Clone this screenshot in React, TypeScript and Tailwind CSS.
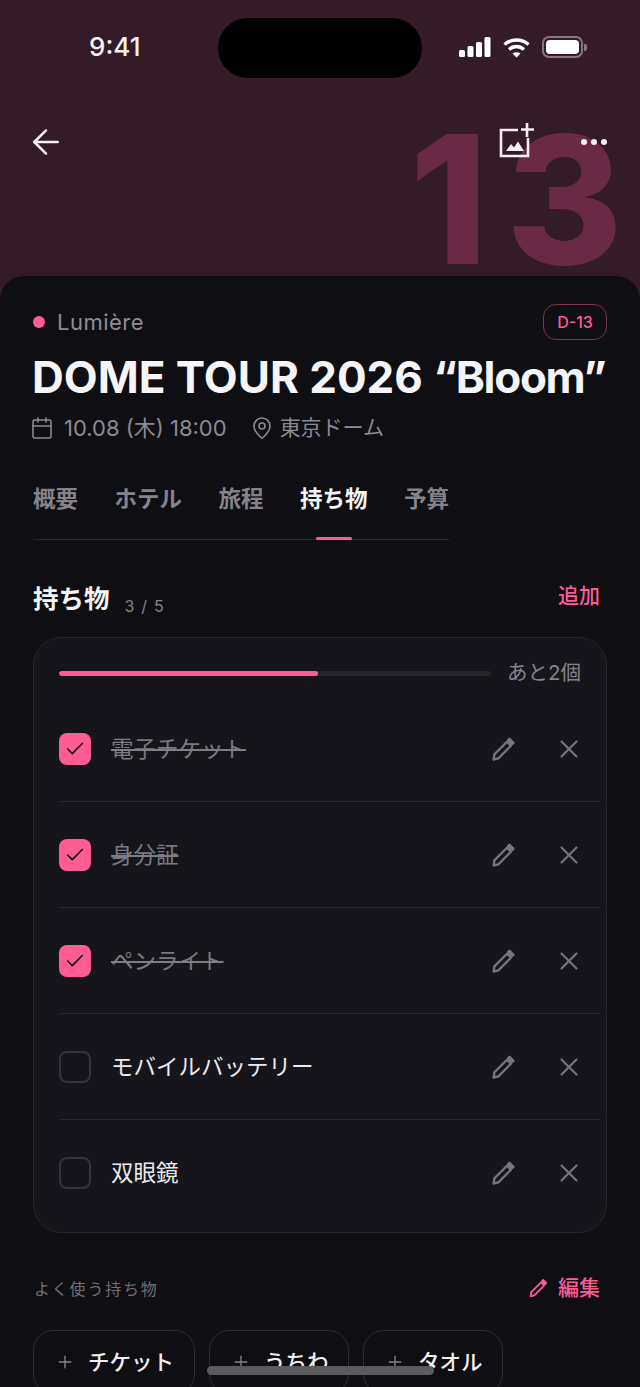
import { ArrowLeft, Calendar, Check, MapPin, Plus, X } from "lucide-react";

const font = { fontFamily: '"Inter", "Noto Sans CJK JP", sans-serif' };

function PencilIcon({ className }: { className: string }) {
  return (
    <svg viewBox="0 0 24 24" fill="none" stroke="currentColor" strokeWidth="2" strokeLinejoin="round" className={className}>
      <path d="M4 21l.6-4.4L15.4 5.8l3.4 3.4L8 20z" />
      <path d="M17.6 3.2l3.4 3.4-1.2 1.2-3.4-3.4z" fill="currentColor" />
    </svg>
  );
}

function ImagePlusIcon() {
  return (
    <svg viewBox="0 0 36 36" width="36" height="36" fill="none" className="text-[#f4eef1]">
      <path d="M19 8H2v26h27V16" stroke="currentColor" strokeWidth="2.6" />
      <path d="M28 1v14M22 7.5h13" stroke="currentColor" strokeWidth="2.6" />
      <path d="M7 29l5-7 3 3.5 4-6 6 9.5z" fill="currentColor" />
    </svg>
  );
}

const items = [
  { label: "電子チケット", done: true },
  { label: "身分証", done: true },
  { label: "ペンライト", done: true },
  { label: "モバイルバッテリー", done: false },
  { label: "双眼鏡", done: false },
];

const tabs = ["概要", "ホテル", "旅程", "持ち物", "予算"];
const chips = [
  { label: "チケット", w: "w-[162px]" },
  { label: "うちわ", w: "w-[140px]" },
  { label: "タオル", w: "w-[140px]" },
];

export default function App() {
  return (
    <div style={font} className="relative flex h-[1387px] w-[640px] flex-col overflow-hidden bg-[#341b28]">
      <header className="relative h-[276px] shrink-0">
        <div className="absolute -right-[1px] top-[82px] text-[178px] font-extrabold leading-[236px] tracking-[18px] text-[#6a2a45]">13</div>
        <div className="absolute left-[218px] top-[18px] h-[60px] w-[204px] rounded-[30px] bg-black" />
        <div className="relative flex h-[94px] items-center justify-between pl-[89px] pr-[53px]">
          <span className="text-[26px] font-medium leading-none text-[#f7f3f5]">9:41</span>
          <div className="flex items-center gap-[12px]">
            <svg width="32" height="20" viewBox="0 0 32 20" fill="#fff">
              <rect x="0" y="13" width="6" height="7" rx="1.5" />
              <rect x="8.5" y="9" width="6" height="11" rx="1.5" />
              <rect x="17" y="5" width="6" height="15" rx="1.5" />
              <rect x="25.5" y="0" width="6" height="20" rx="1.5" />
            </svg>
            <svg width="27" height="21" viewBox="0 0 27 21" fill="none" stroke="#fff" strokeWidth="3.4">
              <path d="M1.5 7.5c7-6 17-6 24 0" />
              <path d="M6 12.5c4.5-4 10.5-4 15 0" />
              <path d="M13.5 20.5l-4-4c2.4-1.8 5.6-1.8 8 0z" fill="#fff" stroke="none" />
            </svg>
            <div className="flex items-center gap-[1px]">
              <div className="h-[22px] w-[41px] rounded-[7px] border-[2px] border-[#8a7480] p-[2px]">
                <div className="h-full w-full rounded-[4px] bg-white" />
              </div>
              <div className="h-[7px] w-[3px] rounded-r-[2px] bg-[#8a7480]" />
            </div>
          </div>
        </div>
        <div className="relative mt-[28px] flex h-[40px] items-center pl-[26px] pr-[33px]">
          <ArrowLeft size={40} strokeWidth={1.5} className="text-[#f4eef1]" />
          <div className="ml-auto flex items-center gap-[46px]">
            <div className="-mt-[4px]"><ImagePlusIcon /></div>
            <svg width="26" height="6" viewBox="0 0 26 6" fill="#f4eef1">
              <circle cx="3" cy="3" r="3" />
              <circle cx="13" cy="3" r="3" />
              <circle cx="23" cy="3" r="3" />
            </svg>
          </div>
        </div>
      </header>

      <main className="relative flex-1 rounded-t-[24px] bg-[#0e0e13] px-[33px] pt-[28px]">
        <div className="flex h-[36px] items-center">
          <span className="h-[12px] w-[12px] rounded-full bg-[#ff5c93]" />
          <span className="ml-[12px] text-[22px] tracking-[0.5px] text-[#8f8d96]">Lumière</span>
          <span className="ml-auto flex h-[36px] w-[64px] items-center justify-center rounded-[13px] border-[1.5px] border-[#7a3450] text-[16px] font-medium text-[#ff5c93]">D-13</span>
        </div>

        <h1 className="-ml-[1px] mt-[8px] whitespace-nowrap text-[44px] font-bold leading-[58px] text-[#f5f4f6]">
          <span>DOME TOUR 2026 </span>
          <span className="tracking-[-1.3px]">“Bloom”</span>
        </h1>

        <div className="mt-[6px] flex h-[32px] items-center text-[22px] text-[#8b8a92]">
          <Calendar size={24} strokeWidth={1.6} className="-ml-[3px]" />
          <span className="ml-[10px] whitespace-nowrap">10.08 (木) 18:00</span>
          <MapPin size={24} strokeWidth={1.6} className="ml-[23px]" />
          <span className="ml-[6px] text-[21px]">東京ドーム</span>
        </div>

        <nav className="mt-[39px] flex w-[416px] justify-between border-b border-[#2a2a30] pb-[24px]">
          {tabs.map((t, i) => (
            <div key={t} className={`relative text-[22.5px] font-semibold leading-[32px] ${i === 3 ? "text-[#f5f4f6]" : "text-[#84838b]"}`}>
              {t}
              {i === 3 && <span className="absolute -bottom-[25px] left-1/2 h-[3px] w-[36px] -translate-x-1/2 rounded-full bg-[#ff5c93]" />}
            </div>
          ))}
        </nav>

        <div className="mt-[40px] flex h-[36px] items-center">
          <span className="mt-[2px] text-[25.5px] font-bold leading-[36px] text-[#f5f4f6]">持ち物</span>
          <span className="ml-[15px] mt-[15px] text-[16px] tracking-[1.2px] text-[#85848c]">3 / 5</span>
          <span className="ml-auto mr-[7px] -mt-[4px] text-[21px] font-medium text-[#ff5c93]">追加</span>
        </div>

        <section className="mt-[21px] h-[596px] rounded-[28px] border border-[#25252c] bg-[#15151b] pl-[25px] pr-[5px] pt-[23px]">
          <div className="flex h-[24px] items-center pr-[20px]">
            <div className="h-[5px] w-[432px] overflow-hidden rounded-full bg-[#25252b]">
              <div className="h-full w-[60%] rounded-full bg-[#ff5c93]" />
            </div>
            <span className="ml-auto text-[20.5px] text-[#85848c]">あと2個</span>
          </div>
          <ul className="mt-[11px]">
            {items.map((it, i) => (
              <li key={it.label} className={`flex h-[106px] items-center ${i < 4 ? "border-b border-[#27272e]" : ""}`}>
                {it.done ? (
                  <span className="flex h-[32px] w-[32px] items-center justify-center rounded-[8px] bg-[#ff5c93]">
                    <Check size={22} strokeWidth={1.8} className="text-[#1a0f16]" />
                  </span>
                ) : (
                  <span className="h-[32px] w-[32px] rounded-[8px] border-[2px] border-[#34343b]" />
                )}
                <span className={`ml-[20px] text-[22.5px] ${it.done ? "text-[#7a7981] line-through decoration-[#7f7e86]" : "text-[#ecebee]"}`}>{it.label}</span>
                <PencilIcon className="ml-auto h-[28px] w-[28px] text-[#76757d]" />
                <X size={30} strokeWidth={1.7} className="ml-[37px] mr-[17px] text-[#76757d]" />
              </li>
            ))}
          </ul>
        </section>

        <div className="mt-[38px] flex h-[36px] items-center">
          <span className="ml-[1px] text-[16px] tracking-[1.8px] text-[#6f6e76]">よく使う持ち物</span>
          <PencilIcon className="ml-auto -mt-[2px] h-[22px] w-[22px] text-[#ff5c93]" />
          <span className="ml-[9px] mr-[7px] -mt-[2px] text-[21px] font-medium text-[#ff5c93]">編集</span>
        </div>

        <div className="mt-[23px] flex gap-[14px]">
          {chips.map((c) => (
            <div key={c.label} className={`flex h-[64px] items-center rounded-[20px] border border-[#2c2c33] pl-[21px] ${c.w}`}>
              <Plus size={20} strokeWidth={1.6} className="text-[#85848c]" />
              <span className="ml-[13px] text-[21.5px] font-medium text-[#f0eff2]">{c.label}</span>
            </div>
          ))}
        </div>
      </main>

      <div className="absolute left-[207px] top-[1366px] h-[9px] w-[227px] rounded-full bg-[#5b5b5e]" />
    </div>
  );
}
